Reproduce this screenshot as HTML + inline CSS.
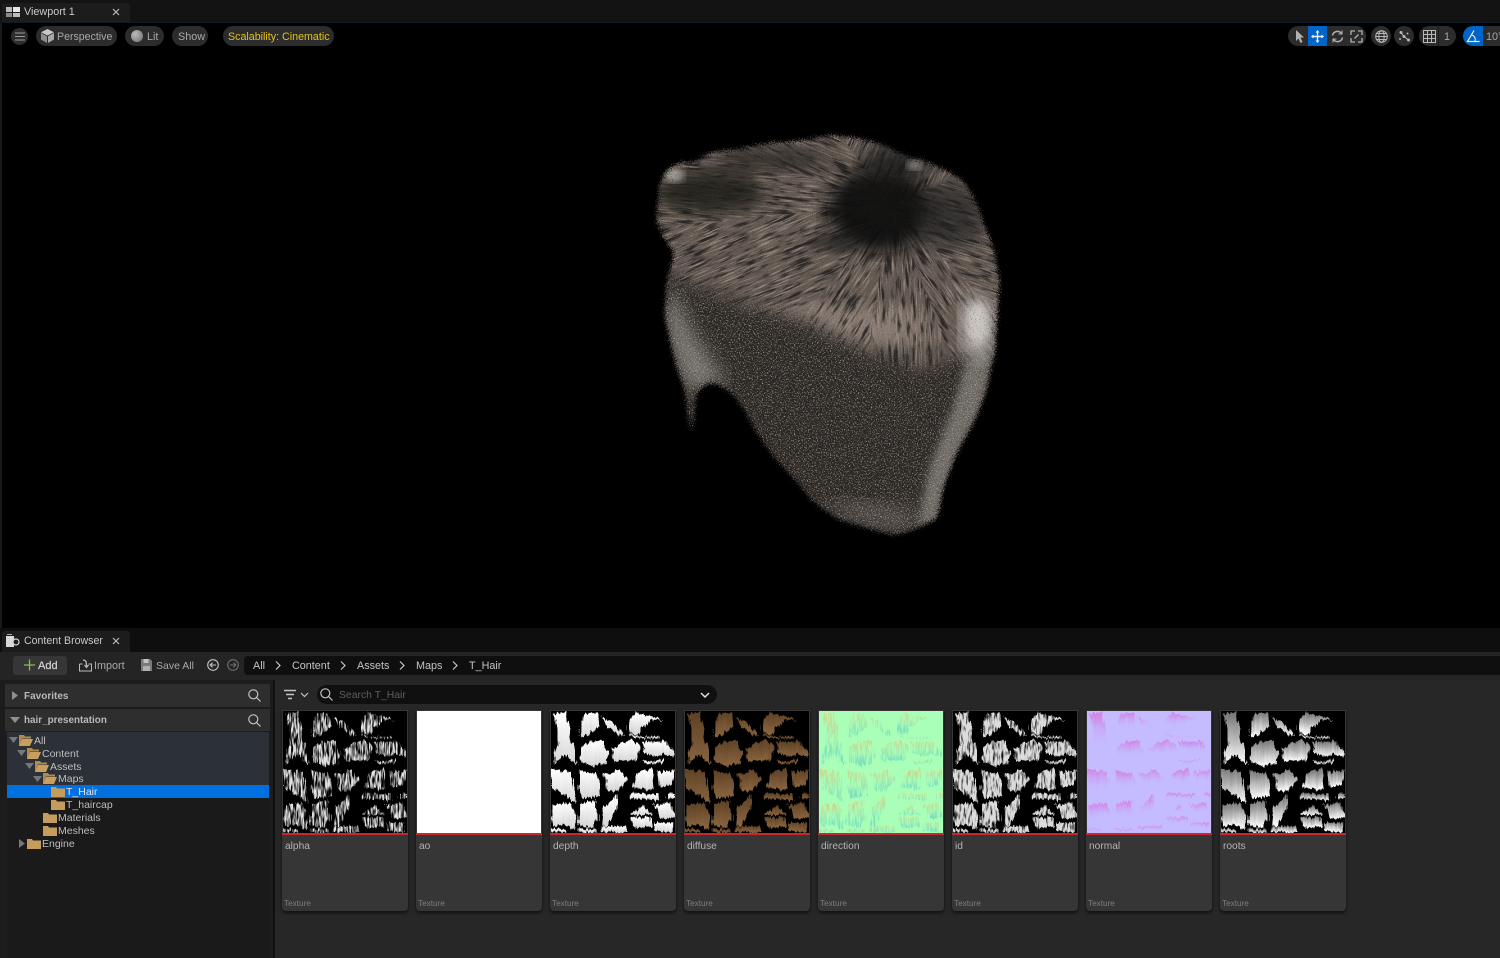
<!DOCTYPE html>
<html lang="en"><head><meta charset="utf-8"><title>Viewport</title>
<style>
html,body{margin:0;padding:0;background:#000}
#r{position:relative;width:1500px;height:958px;overflow:hidden;background:#000;font-family:"Liberation Sans",sans-serif;font-size:10.8px;color:#c0c0c0}
#r div,#r svg,#r span{position:absolute}
.t{white-space:nowrap;line-height:14px}
.pill{background:#2c2c2c;border-radius:10px;height:20px;top:26px}
.hd{left:5px;width:265px;background:#2e2e2e}
.card{top:710px;width:126px;height:201px;background:#363636;border-radius:0 0 4px 4px;box-shadow:0 2px 3px rgba(0,0,0,.6)}
.thumb{left:1px;top:1px;width:124px;height:122px;background:#000;overflow:hidden}
.red{left:0;top:123px;width:126px;height:2px;background:#c8282c}
.nm{left:3px;top:130px;font-size:10.2px;color:#b4b4b4;white-space:nowrap;line-height:14px}
.ty{left:2px;top:188px;font-size:8.2px;color:#7d7d7d;white-space:nowrap;line-height:12px}
.crumb{top:659px;color:#c4c4c4;font-size:10.8px;line-height:14px;white-space:nowrap}
.tr{font-size:10.5px;color:#bdbdbd;line-height:13px;white-space:nowrap}
</style></head><body><div id="r">

<svg width="0" height="0" style="left:0;top:0">
<defs>
<symbol id="atlas" viewBox="0 0 372 369">
<polygon points="10,5 45,5 60,90 80,165 60,150 40,130 5,160 20,90"/>
<polygon points="85,50 100,10 140,5 145,40 115,75 90,80"/>
<polygon points="150,15 190,40 222,72 215,77 170,52"/>
<polygon points="235,30 260,5 290,10 342,32 300,27 280,45 262,72 235,70"/>
<polygon points="232,73 320,75 320,79 232,79"/>
<polygon points="85,112 120,90 160,95 175,130 165,160 125,168 110,160 85,145"/>
<polygon points="185,110 230,90 265,100 262,150 225,152 190,155"/>
<polygon points="275,90 350,90 372,138 340,130 310,135 275,125"/>
<polygon points="275,150 340,150 340,158 280,158"/>
<polygon points="0,175 60,185 75,280 60,275 30,240 0,235"/>
<polygon points="85,180 130,185 150,220 145,260 95,262 85,230"/>
<polygon points="160,190 210,180 230,210 200,245 165,240"/>
<polygon points="240,235 265,180 305,180 310,238 270,235"/>
<polygon points="320,185 372,180 372,225 330,228"/>
<polygon points="240,250 325,250 330,270 240,265"/>
<polygon points="345,250 372,250 372,265 345,268"/>
<polygon points="0,285 60,280 75,330 70,352 30,345 5,352"/>
<polygon points="85,280 135,275 140,320 130,350 85,345"/>
<polygon points="160,290 195,255 195,300 170,345 155,345"/>
<polygon points="240,312 280,285 305,312 240,318"/>
<polygon points="310,285 365,280 372,320 330,325"/>
<polygon points="240,325 300,320 300,350 240,350"/>
<polygon points="310,340 365,335 365,366 310,366"/>
<polygon points="85,355 140,355 140,367 85,367"/>
<polygon points="155,347 225,347 225,366 155,366"/>
<polygon points="0,358 40,358 40,368 0,368"/>
</symbol>
<linearGradient id="gRoots" x1="0" y1="1" x2="0" y2="0"><stop offset="0" stop-color="#fff"/><stop offset="1" stop-color="#777"/></linearGradient>
<linearGradient id="gDepth" x1="0" y1="0" x2="0" y2="1"><stop offset="0" stop-color="#fff"/><stop offset="1" stop-color="#d5d5d5"/></linearGradient>
<linearGradient id="gDiff" x1="0" y1="0" x2="0" y2="1"><stop offset="0" stop-color="#5e4226"/><stop offset="1" stop-color="#8a6540"/></linearGradient>
<linearGradient id="gDir" x1="0" y1="0" x2="0" y2="1"><stop offset="0" stop-color="#e8c070"/><stop offset=".5" stop-color="#9fe0b0"/><stop offset="1" stop-color="#50d0c0"/></linearGradient>
<linearGradient id="gNorm" x1="0" y1="1" x2="0" y2="0"><stop offset=".35" stop-color="#c4bcff" stop-opacity="0"/><stop offset="1" stop-color="#d86cdc"/></linearGradient>
<filter id="rough" x="-5%" y="-5%" width="110%" height="110%" color-interpolation-filters="sRGB">
<feTurbulence type="fractalNoise" baseFrequency=".09" numOctaves="2" seed="5" result="a"/>
<feDisplacementMap in="SourceGraphic" in2="a" scale="5" xChannelSelector="R" yChannelSelector="G" result="s1"/>
<feTurbulence type="fractalNoise" baseFrequency=".5 .02" numOctaves="2" seed="8" result="c"/>
<feDisplacementMap in="s1" in2="c" scale="7" xChannelSelector="A" yChannelSelector="R" result="s2"/>
<feGaussianBlur in="s2" stdDeviation=".3"/>
</filter>
<filter id="streak" x="-5%" y="-5%" width="110%" height="110%" color-interpolation-filters="sRGB">
<feTurbulence type="fractalNoise" baseFrequency=".09" numOctaves="2" seed="5" result="a"/>
<feDisplacementMap in="SourceGraphic" in2="a" scale="5" xChannelSelector="R" yChannelSelector="G" result="s1"/>
<feTurbulence type="fractalNoise" baseFrequency=".5 .02" numOctaves="2" seed="8" result="c"/>
<feDisplacementMap in="s1" in2="c" scale="7" xChannelSelector="A" yChannelSelector="R" result="s2"/>
<feTurbulence type="fractalNoise" baseFrequency=".6 .09" numOctaves="2" seed="4"/>
<feColorMatrix values="0 0 0 0 0 0 0 0 0 0 0 0 0 0 0 3.500 0 0 0 -1.200" result="m"/>
<feComposite in="s2" in2="m" operator="in"/>
<feGaussianBlur stdDeviation=".25"/>
</filter>
<filter id="streak2" x="-5%" y="-5%" width="110%" height="110%" color-interpolation-filters="sRGB">
<feTurbulence type="fractalNoise" baseFrequency=".09" numOctaves="2" seed="5" result="a"/>
<feDisplacementMap in="SourceGraphic" in2="a" scale="5" xChannelSelector="R" yChannelSelector="G" result="s1"/>
<feTurbulence type="fractalNoise" baseFrequency=".5 .02" numOctaves="2" seed="8" result="c"/>
<feDisplacementMap in="s1" in2="c" scale="7" xChannelSelector="A" yChannelSelector="R" result="s2"/>
<feTurbulence type="fractalNoise" baseFrequency=".45 .1" numOctaves="2" seed="9"/>
<feColorMatrix values="0 0 0 0 0 0 0 0 0 0 0 0 0 0 0 3 0 0 0 -.55" result="m"/>
<feComposite in="s2" in2="m" operator="in"/>
<feGaussianBlur stdDeviation=".25"/>
</filter>
<symbol id="fc" viewBox="0 0 14 11"><path d="M0 1h5l1 1.500h8V11H0z" fill="#c69c5d"/></symbol>
<symbol id="fo" viewBox="0 0 14 11"><path d="M0 0h5l1 1.500h6v2H3L1 9 0 11z" fill="#b08a50"/><path d="M3 4h11l-3 7H0z" fill="#c99f60"/></symbol>
</defs>
</svg>

<!-- top tab bar -->
<div style="left:0;top:0;width:1500px;height:23px;background:#131313"></div>
<div style="left:2px;top:3px;width:128px;height:20px;background:#1c1c1c;border-radius:3px 3px 0 0"></div>
<svg style="left:6px;top:6px" width="14" height="12" viewBox="0 0 14 12"><rect x="0" y="1" width="6" height="5" fill="#bdbdbd"/><rect x="7" y="1" width="7" height="5" fill="#e8e8e8"/><rect x="0" y="7" width="6" height="4" fill="#8c8c8c"/><rect x="7" y="7" width="7" height="4" fill="#bdbdbd"/></svg>
<div class="t" style="left:24px;top:5px;color:#c8c8c8">Viewport 1</div>
<svg style="left:112px;top:8px" width="8" height="8" viewBox="0 0 8 8"><path d="M1 1l6 6M7 1L1 7" stroke="#bbb" stroke-width="1.200"/></svg>
<div style="left:2px;top:22px;width:1498px;height:1px;background:#0b1a2c"></div>
<div style="left:0;top:23px;width:2px;height:605px;background:#1a1a1a"></div>

<!-- viewport toolbar -->
<div class="pill" style="left:11px;width:17px;border-radius:50%;height:17px;top:28px;background:#2e2e2e"></div>
<svg style="left:15px;top:32px" width="10" height="9" viewBox="0 0 10 9"><path d="M0 1h10M0 4.500h10M0 8h10" stroke="#9a9a9a" stroke-width="1.100"/></svg>
<div class="pill" style="left:36px;width:81px"></div>
<svg style="left:41px;top:29px" width="13" height="14" viewBox="0 0 13 14"><path d="M6.500 0L13 3.200 6.500 6.500 0 3.200z" fill="#c8c8c8"/><path d="M0 4v6.500L6 14V7.300z" fill="#8e8e8e"/><path d="M13 4v6.500L7 14V7.300z" fill="#a8a8a8"/></svg>
<div class="t" style="left:57px;top:29.500px;color:#a8a8a8;font-size:10.6px">Perspective</div>
<div class="pill" style="left:125px;width:39px"></div>
<div style="left:131px;top:30px;width:12px;height:12px;border-radius:50%;background:radial-gradient(circle at 35% 35%,#bbb,#6c6c6c)"></div>
<div class="t" style="left:147px;top:29.500px;color:#a8a8a8">Lit</div>
<div class="pill" style="left:172px;width:36px"></div>
<div class="t" style="left:178px;top:29.500px;color:#a8a8a8">Show</div>
<div class="pill" style="left:223px;width:111px"></div>
<div class="t" style="left:228px;top:29.500px;color:#e3c21c;font-size:10.7px">Scalability: Cinematic</div>

<!-- right toolbar -->
<div class="pill" style="left:1288px;width:78px"></div>
<div style="left:1308px;top:26px;width:19px;height:20px;background:#0064c8"></div>
<svg style="left:1294px;top:30px" width="11" height="13" viewBox="0 0 11 13"><path d="M2 0l8 7.500H6.500L8.500 12l-2 1-2-4.500L2 11z" fill="#b0b0b0"/></svg>
<svg style="left:1311px;top:30px" width="13" height="13" viewBox="0 0 13 13"><path d="M6.500 0l2 2.500h-1.300V5.800h3.300V4.500L13 6.500l-2.500 2V7.200H7.200v3.300h1.300l-2 2.500-2-2.500h1.300V7.200H2.500v1.300L0 6.500l2.500-2v1.300h3.300V2.500H4.500z" fill="#f0f0f0"/></svg>
<svg style="left:1331px;top:30px" width="13" height="13" viewBox="0 0 13 13" fill="none" stroke="#b0b0b0" stroke-width="1.500"><path d="M1.500 5.500a5 5 0 0 1 9-2"/><path d="M11.500 7.500a5 5 0 0 1-9 2"/><path d="M11 .5v3.500H7.500M2 12.500V9h3.500" stroke-width="1.100"/></svg>
<svg style="left:1350px;top:30px" width="13" height="13" viewBox="0 0 13 13" fill="none" stroke="#b0b0b0" stroke-width="1.300"><path d="M1 5V1h4M12 8v4H8M8 1h4v4M5 12H1V8"/><path d="M4.500 8.500l4-4" /></svg>
<div class="pill" style="left:1371px;width:20px"></div>
<svg style="left:1375px;top:30px" width="13" height="13" viewBox="0 0 13 13" fill="none" stroke="#b8b8b8" stroke-width="1"><circle cx="6.500" cy="6.500" r="5.800"/><ellipse cx="6.500" cy="6.500" rx="2.700" ry="5.800"/><path d="M.7 6.500h11.600M1.500 3.500h10M1.500 9.500h10"/></svg>
<div class="pill" style="left:1394px;width:20px"></div>
<svg style="left:1398px;top:30px" width="13" height="13" viewBox="0 0 13 13" fill="#b8b8b8"><circle cx="3" cy="2.500" r="1.500"/><circle cx="6" cy="6.500" r="1.500"/><circle cx="10.500" cy="10" r="1.500"/><circle cx="9.500" cy="3.500" r="1"/><circle cx="2" cy="9" r="1"/><path d="M3 2.500l3 4 4.500 3.500" stroke="#b8b8b8" fill="none"/></svg>
<div class="pill" style="left:1419px;width:37px"></div>
<div style="left:1438px;top:26px;width:1px;height:20px;background:#1c1c1c"></div>
<svg style="left:1423px;top:30px" width="13" height="13" viewBox="0 0 13 13" fill="none" stroke="#b8b8b8" stroke-width="1"><rect x=".5" y=".5" width="12" height="12"/><path d="M4.500 .5v12M8.500 .5v12M.5 4.500h12M.5 8.500h12"/></svg>
<div class="t" style="left:1444px;top:29.500px;color:#a8a8a8">1</div>
<div style="left:1463px;top:26px;width:20px;height:20px;background:#0064c8;border-radius:10px 0 0 10px"></div>
<div style="left:1483px;top:26px;width:17px;height:20px;background:#2c2c2c"></div>
<svg style="left:1466px;top:30px" width="14" height="13" viewBox="0 0 14 13" fill="none" stroke="#f0f0f0" stroke-width="1.200"><path d="M8 .5L1.500 11.500H13.500"/><path d="M6 5a5 5 0 0 1 3 6.500" stroke-width="1"/></svg>
<div class="t" style="left:1486px;top:29.500px;color:#a8a8a8">10°</div>

<!-- hair -->
<svg style="left:620px;top:110px" width="410" height="450" viewBox="-30 -30 1230 1350">
<defs>
<filter id="edge" filterUnits="userSpaceOnUse" x="-30" y="-30" width="1230" height="1350" color-interpolation-filters="sRGB">
<feGaussianBlur in="SourceAlpha" stdDeviation="12" result="b"/>
<feTurbulence type="fractalNoise" baseFrequency=".3" numOctaves="2" seed="3"/>
<feColorMatrix values="0 0 0 0 1 0 0 0 0 1 0 0 0 0 1 1.800 0 0 0 -.4" result="n"/>
<feComposite in="b" in2="n" operator="arithmetic" k1="0" k2="2.400" k3="1.600" k4="-1.800"/>
<feColorMatrix values="0 0 0 0 1 0 0 0 0 1 0 0 0 0 1 0 0 0 1 0"/>
</filter>
<filter id="fine" filterUnits="userSpaceOnUse" x="0" y="0" width="1170" height="1290" color-interpolation-filters="sRGB"><feTurbulence type="fractalNoise" baseFrequency=".26" numOctaves="2" seed="7"/><feColorMatrix values="0 0 0 0 .72 0 0 0 0 .68 0 0 0 0 .62 5 0 0 0 -2.650"/></filter>
<filter id="fur" filterUnits="userSpaceOnUse" x="-600" y="-600" width="2400" height="2400" color-interpolation-filters="sRGB">
<feTurbulence type="fractalNoise" baseFrequency=".014 .07" numOctaves="3" seed="12"/>
<feColorMatrix values="0 0 0 0 .13 0 0 0 0 .12 0 0 0 0 .12 5 0 0 0 -2.500" result="d"/>
<feTurbulence type="fractalNoise" baseFrequency=".014 .24" numOctaves="2" seed="21"/>
<feColorMatrix values="0 0 0 0 .62 0 0 0 0 .56 0 0 0 0 .52 5 0 0 0 -2.600" result="l"/>
<feMerge><feMergeNode in="d"/><feMergeNode in="l"/></feMerge>
</filter>
<filter id="s20"><feGaussianBlur stdDeviation="26"/></filter>
<filter id="s10"><feGaussianBlur stdDeviation="12"/></filter>
<clipPath id="c1"><polygon points="780,250 0,0 0,330"/></clipPath>
<clipPath id="c2"><polygon points="780,250 0,330 0,750 400,750"/></clipPath>
<clipPath id="c3"><polygon points="780,250 400,750 700,800"/></clipPath>
<clipPath id="c4"><polygon points="780,250 700,800 1000,800"/></clipPath>
<clipPath id="c5"><polygon points="780,250 1000,800 1170,650"/></clipPath>
<clipPath id="c6"><polygon points="780,250 1170,650 1170,100"/></clipPath>
<clipPath id="c7"><polygon points="780,250 1170,100 1170,0 600,0"/></clipPath>
<clipPath id="c8"><polygon points="780,250 600,0 0,0"/></clipPath>
<mask id="mE" maskUnits="userSpaceOnUse" x="-30" y="-30" width="1230" height="1350"><path fill="#fff" filter="url(#edge)" d="M85 190L105 150 150 122 185 125 250 90 330 82 400 68 500 60 600 42 680 50 750 68 830 105 880 115 930 140 1000 175 1040 240 1065 310 1095 390 1112 480 1105 600 1100 690 1075 810 1040 900 985 1000 945 1100 925 1200 850 1235 790 1250 700 1225 620 1200 550 1150 490 1080 430 1015 370 930 345 880 310 830 270 800 240 790 205 815 195 900 190 960 170 900 160 810 135 740 118 670 100 590 105 490 130 400 95 350 75 300z"/></mask>
<mask id="mTop" maskUnits="userSpaceOnUse" x="-30" y="-30" width="1230" height="1350"><path d="M0 0H1170V690L1000 700 880 750 720 700 620 650 500 590 300 540 110 460 0 400z" fill="#fff" filter="url(#s20)"/></mask>
</defs>
<g mask="url(#mE)">
<rect x="0" y="0" width="1170" height="1290" fill="#2b2724"/>
<path d="M120 680L100 570 125 500 190 640 290 790 170 810z" fill="#77736f" filter="url(#s20)"/>
<path d="M1090 690L1060 850 985 1000 925 1200 860 1220 900 1040 970 860 1010 720z" fill="#6e6a66" filter="url(#s10)"/>
<path d="M560 1150L700 1220 850 1240 860 1170 700 1140z" fill="#4f4a46" filter="url(#s20)"/>
<rect x="0" y="0" width="1170" height="1290" filter="url(#fine)" opacity=".75"/>
<g mask="url(#mTop)">
<rect x="0" y="0" width="1170" height="800" fill="#645a53"/>
<ellipse cx="600" cy="620" rx="300" ry="70" fill="#8a7d74" filter="url(#s20)"/>
<g opacity=".85">
<g clip-path="url(#c1)"><rect x="-600" y="-600" width="2400" height="2400" transform="rotate(5 780 250)" filter="url(#fur)"/></g>
<g clip-path="url(#c2)"><rect x="-600" y="-600" width="2400" height="2400" transform="rotate(-23 780 250)" filter="url(#fur)"/></g>
<g clip-path="url(#c3)"><rect x="-600" y="-600" width="2400" height="2400" transform="rotate(-58 780 250)" filter="url(#fur)"/></g>
<g clip-path="url(#c4)"><rect x="-600" y="-600" width="2400" height="2400" transform="rotate(88 780 250)" filter="url(#fur)"/></g>
<g clip-path="url(#c5)"><rect x="-600" y="-600" width="2400" height="2400" transform="rotate(55 780 250)" filter="url(#fur)"/></g>
<g clip-path="url(#c6)"><rect x="-600" y="-600" width="2400" height="2400" transform="rotate(18 780 250)" filter="url(#fur)"/></g>
<g clip-path="url(#c7)"><rect x="-600" y="-600" width="2400" height="2400" transform="rotate(-65 780 250)" filter="url(#fur)"/></g>
<g clip-path="url(#c8)"><rect x="-600" y="-600" width="2400" height="2400" transform="rotate(23 780 250)" filter="url(#fur)"/></g>
</g>
<ellipse cx="240" cy="215" rx="170" ry="65" fill="#1d1a19" filter="url(#s20)" opacity=".85"/>
<ellipse cx="420" cy="120" rx="190" ry="40" fill="#2d2927" filter="url(#s20)" opacity=".8"/>
<ellipse cx="750" cy="270" rx="160" ry="130" fill="#0a090a" filter="url(#s20)" opacity=".92"/>
<ellipse cx="800" cy="125" rx="110" ry="50" fill="#1f1d1d" filter="url(#s20)" opacity=".8"/>
<ellipse cx="960" cy="290" rx="100" ry="100" fill="#242120" filter="url(#s20)" opacity=".7"/>
<ellipse cx="600" cy="370" rx="70" ry="30" fill="#1f1c1b" filter="url(#s10)" opacity=".6"/>
</g>
<ellipse cx="1040" cy="620" rx="50" ry="100" fill="#c8c4c0" filter="url(#s20)" opacity=".85"/>
<ellipse cx="1045" cy="610" rx="34" ry="60" fill="#dcd8d4" filter="url(#s10)" opacity=".6"/>
<ellipse cx="130" cy="165" rx="32" ry="22" fill="#b8b2ac" filter="url(#s10)" opacity=".85"/>
<ellipse cx="855" cy="135" rx="25" ry="14" fill="#a8a4a0" filter="url(#s10)" opacity=".8"/>
</g>
</svg>

<!-- content browser -->
<div style="left:0;top:628px;width:1500px;height:330px;background:#0e0e0e"></div>
<div style="left:2px;top:631px;width:128px;height:21px;background:#1c1c1c;border-radius:3px 3px 0 0;border-top:1px solid #0f2235;box-sizing:border-box"></div>
<svg style="left:6px;top:634px" width="14" height="13" viewBox="0 0 14 13"><path d="M0 2h8v11H0z" fill="#d8d8d8"/><path d="M1 0h5v1H1z" fill="#aaa"/><circle cx="10" cy="8" r="3" fill="#1c1c1c" stroke="#d8d8d8" stroke-width="1.200"/><path d="M8 10.500l-2 2" stroke="#d8d8d8" stroke-width="1.200"/></svg>
<div class="t" style="left:24px;top:634px;color:#c8c8c8;font-size:10.6px">Content Browser</div>
<svg style="left:112px;top:637px" width="8" height="8" viewBox="0 0 8 8"><path d="M1 1l6 6M7 1L1 7" stroke="#bbb" stroke-width="1.200"/></svg>
<div style="left:0;top:652px;width:1500px;height:28px;background:#242424"></div>
<div style="left:13px;top:656px;width:54px;height:19px;background:#363636;border-radius:3px"></div>
<svg style="left:24px;top:659px" width="11" height="12" viewBox="0 0 11 12"><path d="M5.500 .5v11M0 6h11" stroke="#7fc04f" stroke-width="1.300"/></svg>
<div class="t" style="left:38px;top:658.500px;color:#d2d2d2;font-size:11px;-webkit-text-stroke:.2px #d2d2d2">Add</div>
<svg style="left:79px;top:659px" width="13" height="13" viewBox="0 0 13 13" fill="none" stroke="#bbb" stroke-width="1"><path d="M.5 5v7h12V5H9.500M.5 5h3"/><path d="M4 1c3 0 3.500 2 3.500 6M5.500 6l2 2.500 2-2.500" stroke-width="1.300"/></svg>
<div class="t" style="left:94px;top:658.500px;color:#a8a8a8">Import</div>
<svg style="left:141px;top:659px" width="11" height="12" viewBox="0 0 11 12"><path d="M0 0h9l2 2v10H0z" fill="#7a7a7a"/><rect x="2.500" y="0" width="5" height="4" fill="#c4c4c4"/><rect x="2" y="7" width="7" height="5" fill="#b0b0b0"/></svg>
<div class="t" style="left:156px;top:658.500px;color:#a8a8a8;font-size:10.5px">Save All</div>
<svg style="left:207px;top:659px" width="12" height="12" viewBox="0 0 12 12" fill="none" stroke="#c4c4c4" stroke-width="1.100"><circle cx="6" cy="6" r="5.300"/><path d="M9 6H3.500M5.500 3.700L3.200 6l2.300 2.300"/></svg>
<svg style="left:227px;top:659px" width="12" height="12" viewBox="0 0 12 12" fill="none" stroke="#6e6e6e" stroke-width="1.100"><circle cx="6" cy="6" r="5.300"/><path d="M3 6h5.500M6.500 3.700L8.800 6 6.500 8.300"/></svg>
<div style="left:244px;top:656px;width:1256px;height:19px;background:#0f0f0f;border-radius:4px 0 0 4px"></div>
<div class="crumb" style="left:253px">All</div>
<div class="crumb" style="left:292px">Content</div>
<div class="crumb" style="left:357px">Assets</div>
<div class="crumb" style="left:416px">Maps</div>
<div class="crumb" style="left:469px">T_Hair</div>
<svg style="left:275px;top:661px" width="6" height="9" viewBox="0 0 6 9"><path d="M1 .5l4 4-4 4" fill="none" stroke="#c8c8c8" stroke-width="1.200"/></svg>
<svg style="left:340px;top:661px" width="6" height="9" viewBox="0 0 6 9"><path d="M1 .5l4 4-4 4" fill="none" stroke="#c8c8c8" stroke-width="1.200"/></svg>
<svg style="left:399px;top:661px" width="6" height="9" viewBox="0 0 6 9"><path d="M1 .5l4 4-4 4" fill="none" stroke="#c8c8c8" stroke-width="1.200"/></svg>
<svg style="left:452px;top:661px" width="6" height="9" viewBox="0 0 6 9"><path d="M1 .5l4 4-4 4" fill="none" stroke="#c8c8c8" stroke-width="1.200"/></svg>

<!-- left panel -->
<div style="left:0;top:680px;width:275px;height:278px;background:#1c1c1c"></div>
<div style="left:273px;top:680px;width:2px;height:278px;background:#0f0f0f"></div>
<div class="hd" style="top:684px;height:23px"></div>
<div class="hd" style="top:709px;height:22px"></div>
<svg style="left:12px;top:691px" width="6" height="9" viewBox="0 0 6 9"><path d="M0 0l6 4.500L0 9z" fill="#8f8f8f"/></svg>
<svg style="left:10px;top:717px" width="10" height="6" viewBox="0 0 10 6"><path d="M0 0h10L5 6z" fill="#8f8f8f"/></svg>
<div class="t" style="left:24px;top:689.500px;font-weight:bold;font-size:10px;color:#b8b8b8">Favorites</div>
<div class="t" style="left:24px;top:713.500px;font-weight:bold;font-size:9.900px;color:#b8b8b8">hair_presentation</div>
<svg style="left:248px;top:689px" width="13" height="13" viewBox="0 0 13 13" fill="none" stroke="#c4c4c4" stroke-width="1.200"><circle cx="5.300" cy="5.300" r="4.500"/><path d="M8.500 8.500L12.500 12.500"/></svg>
<svg style="left:248px;top:714px" width="13" height="13" viewBox="0 0 13 13" fill="none" stroke="#c4c4c4" stroke-width="1.200"><circle cx="5.300" cy="5.300" r="4.500"/><path d="M8.500 8.500L12.500 12.500"/></svg>
<div style="left:7px;top:732px;width:262px;height:226px;background:#1a1a1a"></div>
<div style="left:7px;top:732px;width:262px;height:53px;background:#2c3138"></div>
<div style="left:7px;top:785px;width:262px;height:13px;background:#0070e0"></div>

<svg style="left:9px;top:737px" width="9" height="6" viewBox="0 0 9 6"><path d="M0 0h9L4.500 6z" fill="#777"/></svg>
<svg style="left:19px;top:735px" width="14" height="11"><use href="#fo"/></svg>
<div class="tr" style="left:34px;top:734.500px">All</div>
<svg style="left:17px;top:750px" width="9" height="6" viewBox="0 0 9 6"><path d="M0 0h9L4.500 6z" fill="#777"/></svg>
<svg style="left:27px;top:748px" width="14" height="11"><use href="#fo"/></svg>
<div class="tr" style="left:42px;top:747.500px">Content</div>
<svg style="left:25px;top:763px" width="9" height="6" viewBox="0 0 9 6"><path d="M0 0h9L4.500 6z" fill="#777"/></svg>
<svg style="left:35px;top:761px" width="14" height="11"><use href="#fo"/></svg>
<div class="tr" style="left:50px;top:760.500px">Assets</div>
<svg style="left:33px;top:776px" width="9" height="6" viewBox="0 0 9 6"><path d="M0 0h9L4.500 6z" fill="#777"/></svg>
<svg style="left:43px;top:773px" width="14" height="11"><use href="#fo"/></svg>
<div class="tr" style="left:58px;top:772.500px">Maps</div>
<svg style="left:51px;top:786px" width="14" height="11"><use href="#fc"/></svg>
<div class="tr" style="left:66px;top:785.500px;color:#e4e4e4">T_Hair</div>
<svg style="left:51px;top:799px" width="14" height="11"><use href="#fc"/></svg>
<div class="tr" style="left:66px;top:798.500px">T_haircap</div>
<svg style="left:43px;top:812px" width="14" height="11"><use href="#fc"/></svg>
<div class="tr" style="left:58px;top:811.500px">Materials</div>
<svg style="left:43px;top:825px" width="14" height="11"><use href="#fc"/></svg>
<div class="tr" style="left:58px;top:824.500px">Meshes</div>
<svg style="left:19px;top:839px" width="6" height="9" viewBox="0 0 6 9"><path d="M0 0l6 4.500L0 9z" fill="#777"/></svg>
<svg style="left:27px;top:838px" width="14" height="11"><use href="#fc"/></svg>
<div class="tr" style="left:42px;top:837.500px">Engine</div>

<!-- right panel -->
<div style="left:275px;top:680px;width:1225px;height:278px;background:#272727"></div>
<svg style="left:284px;top:689px" width="26" height="12" viewBox="0 0 26 12" fill="none" stroke="#c4c4c4"><path d="M0 1.500h12M2 5.500h8M4 9.500h4" stroke-width="1.400"/><path d="M17 4l3.500 3.500L24 4" stroke-width="1.200"/></svg>
<div style="left:317px;top:685px;width:400px;height:19px;background:#101010;border-radius:10px"></div>
<svg style="left:320px;top:688px" width="13" height="13" viewBox="0 0 13 13" fill="none" stroke="#c4c4c4" stroke-width="1.200"><circle cx="5.300" cy="5.300" r="4.500"/><path d="M8.500 8.500L12.500 12.500"/></svg>
<div class="t" style="left:339px;top:688.500px;color:#5e5e5e;font-size:10.4px">Search T_Hair</div>
<svg style="left:700px;top:692px" width="10" height="6" viewBox="0 0 10 6"><path d="M1 1l4 4 4-4" fill="none" stroke="#e0e0e0" stroke-width="1.500"/></svg>

<!-- cards -->
<div class="card" style="left:282px"><div class="thumb"><svg width="124" height="122" viewBox="0 0 124 122"><use href="#atlas" width="124" height="122" fill="#e4e4e4" filter="url(#streak)"/></svg></div><div class="red"></div><div class="nm">alpha</div><div class="ty">Texture</div></div>
<div class="card" style="left:416px"><div class="thumb" style="background:#fff"></div><div class="red"></div><div class="nm">ao</div><div class="ty">Texture</div></div>
<div class="card" style="left:550px"><div class="thumb"><svg width="124" height="122" viewBox="0 0 124 122"><use href="#atlas" width="124" height="122" fill="url(#gDepth)" filter="url(#rough)"/></svg></div><div class="red"></div><div class="nm">depth</div><div class="ty">Texture</div></div>
<div class="card" style="left:684px"><div class="thumb"><svg width="124" height="122" viewBox="0 0 124 122"><use href="#atlas" width="124" height="122" fill="url(#gDiff)" filter="url(#rough)"/></svg></div><div class="red"></div><div class="nm">diffuse</div><div class="ty">Texture</div></div>
<div class="card" style="left:818px"><div class="thumb" style="background:#aaffb8"><svg width="124" height="122" viewBox="0 0 124 122"><use href="#atlas" width="124" height="122" fill="url(#gDir)" filter="url(#streak)" opacity=".7"/></svg></div><div class="red"></div><div class="nm">direction</div><div class="ty">Texture</div></div>
<div class="card" style="left:952px"><div class="thumb"><svg width="124" height="122" viewBox="0 0 124 122"><use href="#atlas" width="124" height="122" fill="#dcdcdc" filter="url(#streak2)"/></svg></div><div class="red"></div><div class="nm">id</div><div class="ty">Texture</div></div>
<div class="card" style="left:1086px"><div class="thumb" style="background:#c4bcff"><svg width="124" height="122" viewBox="0 0 124 122"><use href="#atlas" width="124" height="122" fill="url(#gNorm)" filter="url(#rough)" opacity=".75"/></svg></div><div class="red"></div><div class="nm">normal</div><div class="ty">Texture</div></div>
<div class="card" style="left:1220px"><div class="thumb"><svg width="124" height="122" viewBox="0 0 124 122"><use href="#atlas" width="124" height="122" fill="url(#gRoots)" filter="url(#rough)"/></svg></div><div class="red"></div><div class="nm">roots</div><div class="ty">Texture</div></div>

</div></body></html>
